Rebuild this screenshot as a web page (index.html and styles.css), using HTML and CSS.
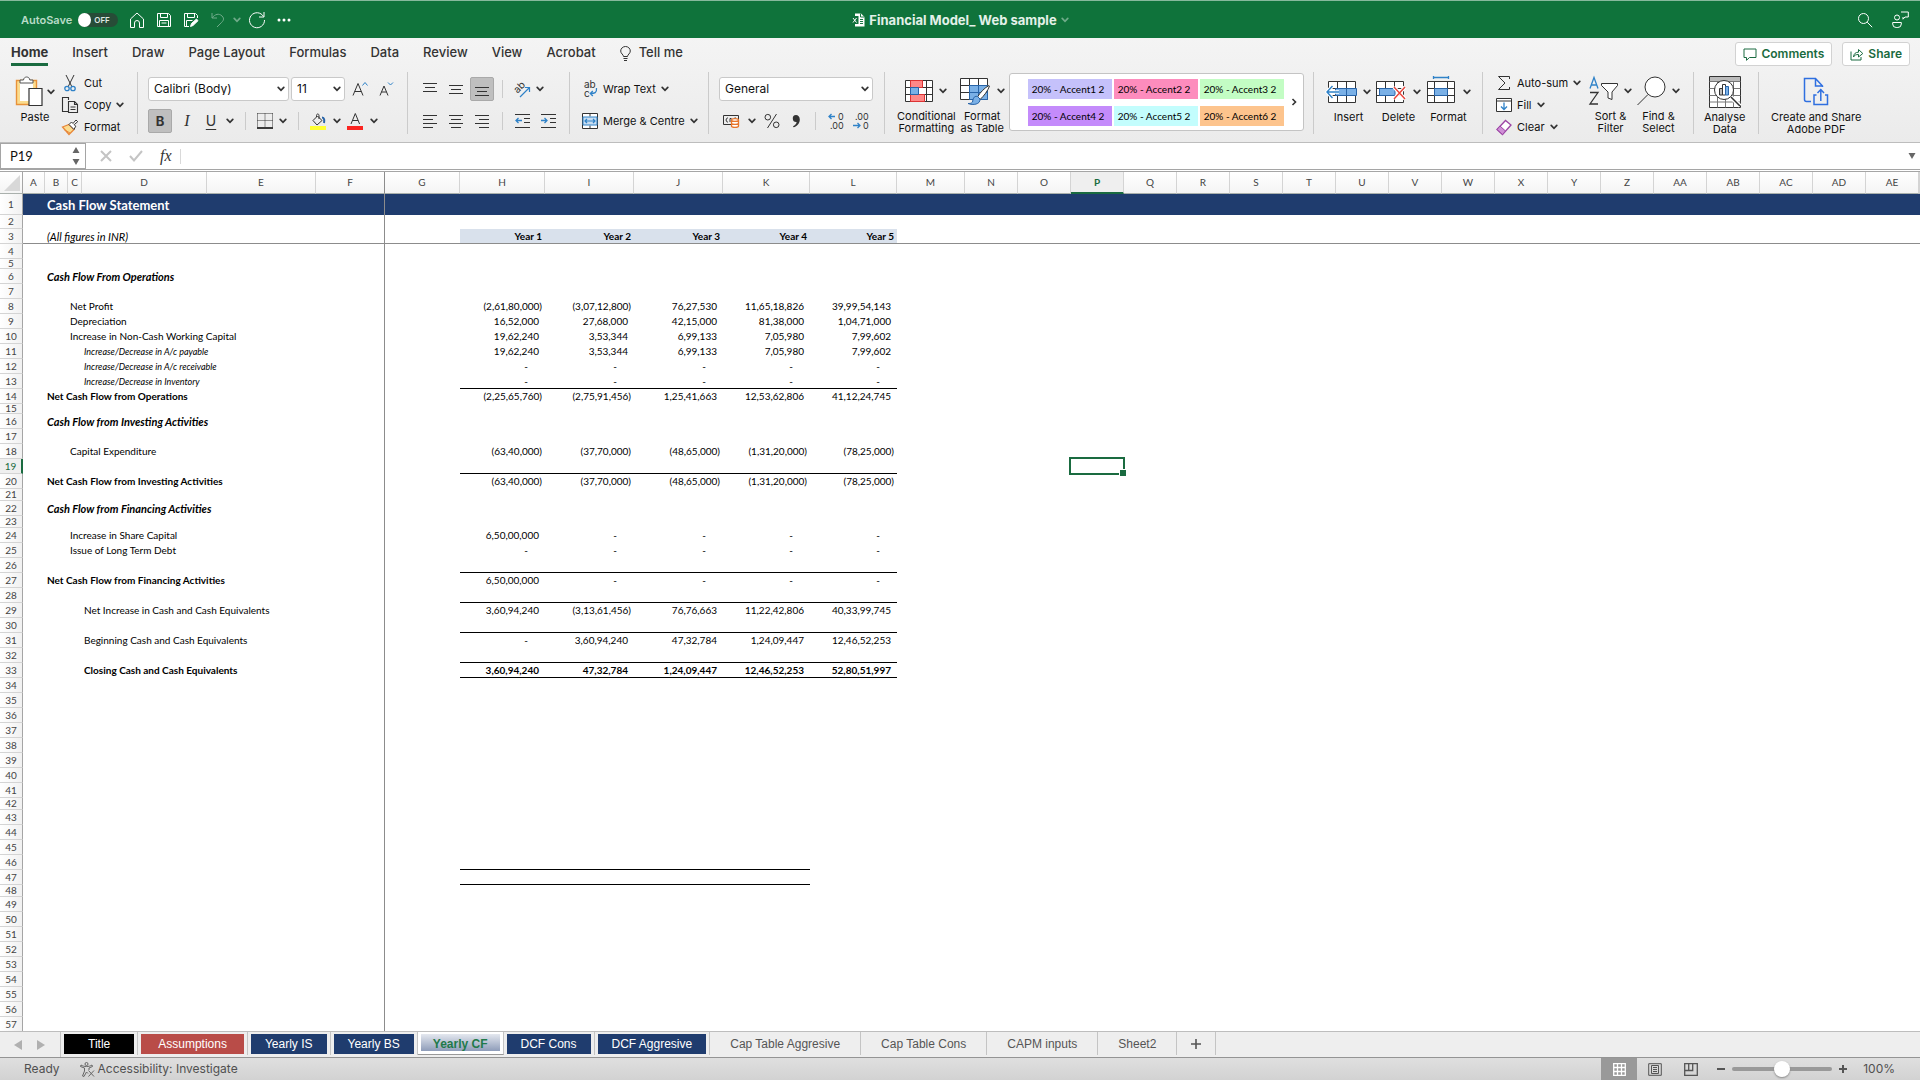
FILE: index.html
```html
<!DOCTYPE html>
<html lang="en">
<head>
  <meta charset="UTF-8">
  <meta name="viewport" content="width=device-width, initial-scale=1.0">
  <title>Financial Model_ Web sample</title>
  <link rel="stylesheet" href="styles.css">
</head>
<body>
  <svg class="sprite" aria-hidden="true">
    <symbol id="chev" viewBox="0 0 8 6"><path d="M1.2 1.3L4 4.3l2.8-3" fill="none" stroke="currentColor" stroke-width="1.7" stroke-linecap="round"/></symbol>
  </svg>

  <header class="titlebar">
    <div class="quick">
      <label class="autosave">AutoSave
        <span class="toggle"><input type="checkbox"><span>OFF</span></span>
      </label>
      <button aria-label="Home"><svg width="16" height="16" viewBox="0 0 16 16"><path d="M1.5 7L8 1l6.500 6v8.500H10.500V11a2.500 2.500 0 0 0-5 0v4.500H1.500z"/></svg></button>
      <button aria-label="Save"><svg width="16" height="16" viewBox="0 0 16 16"><path d="M1.500 1.500h11l2 2v11h-13zM4.500 1.500v4h7v-4M3.500 14.500v-6h9v6M5.500 11h5"/></svg></button>
      <button aria-label="Save as"><svg width="16" height="16" viewBox="0 0 16 16"><path d="M6 14.500H1.500v-13h11l2 2V6M4.500 1.500v4h7v-4M3.500 14.500v-6h6"/><path d="M7.500 14.500l1-3 5-4.500 1.500 1.700-5 4.800z" fill="#fff"/></svg></button>
      <button class="faded" aria-label="Undo"><svg width="16" height="16" viewBox="0 0 16 16"><path d="M2 1v5h5M2 6c3-4 7-5 10-2s1 5-1 7l-4 4"/></svg></button>
      <button class="faded undo-list" aria-label="Undo list"><svg class="chev" width="8" height="6"><use href="#chev"/></svg></button>
      <button aria-label="Redo"><svg width="18" height="18" viewBox="0 0 18 18"><path d="M15.500 5.500A7.500 7.500 0 1 0 16.500 9M16 1v5h-5"/></svg></button>
      <button aria-label="More"><svg width="14" height="4" viewBox="0 0 14 4"><g fill="#fff" stroke="none"><circle cx="2" cy="2" r="1.500"/><circle cx="7" cy="2" r="1.500"/><circle cx="12" cy="2" r="1.500"/></g></svg></button>
    </div>
    <div class="doc">
      <svg width="14" height="14" viewBox="0 0 14 14"><path d="M4 .5h6l3.500 3.500v9.500H4z" fill="#fff" stroke="none"/><path d="M9.500 .5V4h4M9 6.500h3M9 8.500h3M9 10.500h3" stroke="#1a7a45"/><path d="M0 3h7.500v8H0z" fill="#0f703b" stroke="none"/><path d="M2 5l3.500 4.500M5.500 5L2 9.500"/></svg>
      <h1>Financial Model_ Web sample</h1>
      <svg class="chev faded" width="8" height="6"><use href="#chev"/></svg>
    </div>
    <div class="account">
      <button aria-label="Search"><svg width="16" height="16" viewBox="0 0 16 16"><circle cx="6.500" cy="6.500" r="5"/><path d="M10.200 10.200l5 5"/></svg></button>
      <button aria-label="Collaborate"><svg width="17" height="17" viewBox="0 0 17 17"><circle cx="5" cy="6.500" r="2.500"/><path d="M.7 11.500h8.600v1.500a3.500 3.500 0 0 1-3.500 3.500H4.200A3.500 3.500 0 0 1 .7 13zM9 1h7.300v5H13l-2 2.200V6"/></svg></button>
    </div>
  </header>

  <section class="ribbon">
    <nav class="tabs">
      <a class="active" href="#">Home</a>
      <a href="#">Insert</a>
      <a href="#">Draw</a>
      <a href="#">Page Layout</a>
      <a href="#">Formulas</a>
      <a href="#">Data</a>
      <a href="#">Review</a>
      <a href="#">View</a>
      <a href="#">Acrobat</a>
      <a class="tell" href="#"><svg width="11" height="15" viewBox="0 0 11 15"><path d="M3.500 10.500c0-2-2.800-2.800-2.800-5.500a4.800 4.500 0 0 1 9.600 0c0 2.700-2.800 3.500-2.800 5.500zM3.500 12.500h4M4 14.500h3"/></svg>Tell me</a>
      <div class="actions">
        <button><svg width="14" height="13" viewBox="0 0 14 13"><path d="M1 1h12v8.500H6.500l-3 2.800V9.500H1z"/></svg>Comments</button>
        <button><svg width="14" height="13" viewBox="0 0 14 13"><path d="M1 3.500v8.500h10V9M3.500 9c.3-3.500 2.200-4.800 5-4.800V1.500L12.800 5.500 8.500 9V6.500C6 6.500 4.500 7 3.500 9z"/></svg>Share</button>
      </div>
    </nav>

    <div class="groups">
      <div class="group clipboard">
        <button class="big">
          <span class="icon"><svg width="28" height="31" viewBox="0 0 28 31"><path d="M1.500 4.500h20v24h-20z" fill="#fbdc8e" stroke="#e8923a" stroke-width="1.400"/><path d="M5 7h13v18H5z" fill="#fff" stroke="none"/><path d="M5 7V4h3.500c.3-4 6-4 6.300 0H18v3z" fill="#fff" stroke="#555"/><path d="M14 12.500h13v17H14z" fill="#fff" stroke="#333" stroke-width="1.200"/></svg><svg class="chev" width="8" height="6"><use href="#chev"/></svg></span>
          Paste
        </button>
        <div class="stack">
          <button><svg width="18" height="18" viewBox="0 0 18 18"><path d="M5 1l6 12M13 1L7 13" /><g stroke="#2f82c8" stroke-width="1.300"><circle cx="6" cy="14.500" r="2.200"/><circle cx="12" cy="14.500" r="2.200"/></g></svg>Cut</button>
          <button><svg width="18" height="18" viewBox="0 0 18 18"><path d="M7 15.500H1.500v-14h6V4M7.500 5.500h6l3 3v8h-9zM13.500 5.500v3h3M9.500 11h5M9.500 13.500h5" stroke-width="1.100"/></svg>Copy<svg class="chev" width="8" height="6"><use href="#chev"/></svg></button>
          <button><svg width="18" height="18" viewBox="0 0 18 18"><path d="M1.500 9L8 6.500l5 5L8 16.500z" fill="#fbdc8e" stroke="#e8873a" stroke-width="1.300"/><path d="M3 11.500l6 3.500" stroke="#e8873a"/><path d="M8 6.500L10.500 4l1.500 1.500L15 2l1.700 1.700-3.500 3 1.500 1.500L13 11.500z" fill="#fff"/></svg>Format</button>
        </div>
      </div>

      <div class="group font">
        <div class="row">
          <label class="combo combo-font"><select aria-label="Font"><option>Calibri (Body)</option></select><svg class="chev" width="8" height="6"><use href="#chev"/></svg></label>
          <label class="combo combo-size"><select aria-label="Font size"><option>11</option></select><svg class="chev" width="8" height="6"><use href="#chev"/></svg></label>
          <button class="grow" aria-label="Increase font size"><svg width="17" height="16" viewBox="0 0 17 16"><path d="M1 14.500L6 2.500l5 12M2.800 10.500h6.400"/><path d="M10.500 4.500l2.500-3 2.500 3" stroke="#2f82c8"/></svg></button>
          <button class="shrink" aria-label="Decrease font size"><svg width="17" height="16" viewBox="0 0 17 16"><path d="M2 14.500l4-9.500 4 9.500M3.500 11h5"/><path d="M10 1.500l2.500 2.500L15 1.500" stroke="#2f82c8"/></svg></button>
        </div>
        <div class="row row-format">
          <button class="square pressed" aria-label="Bold"><b>B</b></button>
          <button class="glyph" aria-label="Italic"><i>I</i></button>
          <button class="glyph under" aria-label="Underline">U</button>
          <svg class="chev" width="8" height="6"><use href="#chev"/></svg>
          <span class="rule"></span>
          <button aria-label="Borders"><svg width="16" height="16" viewBox="0 0 16 16"><path d="M.5 .5h15M.5 7.500h15M.5 .5v14M8 .5v14M15.500 .5v14" stroke-dasharray="1 1"/><path d="M0 15h16" stroke="#000" stroke-width="1.500"/></svg></button>
          <svg class="chev" width="8" height="6"><use href="#chev"/></svg>
          <span class="rule"></span>
          <button aria-label="Fill colour"><svg width="17" height="17" viewBox="0 0 17 17"><path d="M3 7.500L7.500 3l4.500 4.500L7 12zM6.500 4V2.500c0-2 2.500-2 2.500 0V6"/><path d="M12 4.500c2.500 0 2.500 3 2 5.500" stroke="#2864a8" stroke-width="2"/><path d="M0 13h16v4H0z" fill="#ff3" stroke="none"/></svg></button>
          <svg class="chev" width="8" height="6"><use href="#chev"/></svg>
          <button aria-label="Font colour"><svg width="17" height="17" viewBox="0 0 17 17"><path d="M4 11l4.300-10.500L12.600 11M5.500 7.500h5.600"/><path d="M0 13h16v4H0z" fill="#fb2420" stroke="none"/></svg></button>
          <svg class="chev" width="8" height="6"><use href="#chev"/></svg>
        </div>
      </div>

      <div class="group align">
        <div class="row">
          <button class="square" aria-label="Top align"><svg width="14" height="14" viewBox="0 0 14 14"><path d="M0 1.500h14M2 5.500h10M0 9.500h14"/></svg></button>
          <button class="square" aria-label="Middle align"><svg width="14" height="14" viewBox="0 0 14 14"><path d="M0 3.500h14M2 7.500h10M0 11.500h14"/></svg></button>
          <button class="square pressed" aria-label="Bottom align"><svg width="14" height="14" viewBox="0 0 14 14"><path d="M0 5.500h14M2 9.500h10M0 13.500h14"/></svg></button>
          <span class="rule"></span>
          <button class="square" aria-label="Orientation"><svg width="18" height="18" viewBox="0 0 18 18"><path d="M7 17l9-9M12 7.500h4.500V12" stroke="#2f82c8" stroke-width="1.200"/><text x="1" y="11" font-size="10" transform="rotate(-45 6 8)" fill="#333" stroke="none">ab</text></svg></button>
          <svg class="chev" width="8" height="6"><use href="#chev"/></svg>
        </div>
        <div class="row">
          <button class="square" aria-label="Align left"><svg width="14" height="14" viewBox="0 0 14 14"><path d="M0 1.500h14M0 5.500h10M0 9.500h14M0 13.500h10"/></svg></button>
          <button class="square" aria-label="Centre"><svg width="14" height="14" viewBox="0 0 14 14"><path d="M0 1.500h14M2 5.500h10M0 9.500h14M2 13.500h10"/></svg></button>
          <button class="square" aria-label="Align right"><svg width="14" height="14" viewBox="0 0 14 14"><path d="M0 1.500h14M4 5.500h10M0 9.500h14M4 13.500h10"/></svg></button>
          <span class="rule"></span>
          <button class="square" aria-label="Decrease indent"><svg width="15" height="14" viewBox="0 0 15 14"><path d="M0 .5h15M9 4.500h6M9 8.500h6M0 13.500h15"/><path d="M7 6.500H1M3.500 4L1 6.500 3.500 9" stroke="#2f82c8" stroke-width="1.300"/></svg></button>
          <button class="square" aria-label="Increase indent"><svg width="15" height="14" viewBox="0 0 15 14"><path d="M0 .5h15M9 4.500h6M9 8.500h6M0 13.500h15"/><path d="M0 6.500h6M3.500 4L6 6.500 3.500 9" stroke="#2f82c8" stroke-width="1.300"/></svg></button>
        </div>
      </div>

      <div class="group wrap">
        <button class="row"><svg width="16" height="20" viewBox="0 0 16 20"><g font-size="10" fill="#333" stroke="none"><text x="2" y="9">ab</text><text x="2" y="18">c</text></g><path d="M14.500 9c.5 5-2 5.500-6 5.500M10.800 12l-2.500 2.500 2.500 2.500" stroke="#2f82c8" stroke-width="1.300"/></svg>Wrap Text<svg class="chev" width="8" height="6"><use href="#chev"/></svg></button>
        <button class="row"><svg width="16" height="16" viewBox="0 0 16 16"><path d="M.5 .5h15v15H.5zM8 .5v3M8 12.500v3" fill="#fff"/><path d="M1 4h14v8H1z" fill="#c9def2" stroke="#2f82c8"/><path d="M3 8h10M5 6L3 8l2 2M11 6l2 2-2 2" stroke="#2f82c8" stroke-width="1.200"/></svg>Merge &amp; Centre<svg class="chev" width="8" height="6"><use href="#chev"/></svg></button>
      </div>

      <div class="group number">
        <div class="row">
          <label class="combo combo-number"><select aria-label="Number format"><option>General</option></select><svg class="chev" width="8" height="6"><use href="#chev"/></svg></label>
        </div>
        <div class="row row-number">
          <button aria-label="Currency"><svg width="17" height="14" viewBox="0 0 17 14"><path d="M.5 1.500h15v9H.5z"/><path d="M5 4c-2.500-.5-2.500 4.500 0 4M7 4.500v3.500M7 4.500h1.500M13 4c-2-.5-2.500 1.500-2.500 3"/><path d="M8.500 6v6c0 1.800 7 1.800 7 0V6c0-1.800-7-1.800-7 0zM8.500 6c0 1.800 7 1.800 7 0M8.500 9c0 1.800 7 1.800 7 0" fill="#fff" stroke="#e8762c" stroke-width="1.300"/></svg></button>
          <svg class="chev" width="8" height="6"><use href="#chev"/></svg>
          <button aria-label="Percent"><svg width="16" height="16" viewBox="0 0 16 16"><circle cx="3.800" cy="4.200" r="2.800"/><circle cx="12.200" cy="11.800" r="2.800"/><path d="M12.500 1L3.500 15"/></svg></button>
          <button aria-label="Comma style"><svg width="16" height="14" viewBox="-3 0 16 14"><path d="M5 1a3.500 3.500 0 1 0 .6 7C5.400 10 4 11.500 2 12.300l.5 1C6 12.500 8.800 9.500 8.800 5.500 8.800 2.500 7 1 5 1z" fill="#333" stroke="none"/></svg></button>
          <span class="rule"></span>
          <button aria-label="Increase decimal"><svg width="17" height="20" viewBox="0 0 17 20"><g font-size="9" fill="#333" stroke="none"><text x="10" y="9">0</text><text x="2" y="18">.00</text></g><path d="M7 5.500H1M3.500 3L1 5.500 3.500 8" stroke="#2f82c8" stroke-width="1.300"/></svg></button>
          <button aria-label="Decrease decimal"><svg width="17" height="20" viewBox="0 0 17 20"><g font-size="9" fill="#333" stroke="none"><text x="2" y="9">.00</text><text x="10" y="18">0</text></g><path d="M0 14.500h7M4.500 12L7 14.500 4.500 17" stroke="#2f82c8" stroke-width="1.300"/></svg></button>
        </div>
      </div>

      <div class="group styles">
        <button class="big">
          <span class="icon"><svg width="28" height="22" viewBox="0 0 28 22"><path d="M.5 .5h27v21H.5z" fill="#fff"/><path d="M.5 7.500h27M.5 14.500h27M5.500 .5v21M21.500 .5v21"/><path d="M5.500 .5h12v7h-12zM5.500 14.500h14v7h-14z" fill="#f88" stroke="#d33"/><path d="M5.500 7.500h8v7h-8z" fill="#7ab0e6" stroke="#2864a8"/></svg><svg class="chev" width="8" height="6"><use href="#chev"/></svg></span>
          Conditional<br>Formatting
        </button>
        <button class="big">
          <span class="icon"><svg width="31" height="28" viewBox="0 0 31 28"><path d="M.5 1.500h27v21H.5z" fill="#fff"/><path d="M.5 8.500h27M.5 15.500h27M9.500 1.500v21M18.500 1.500v21"/><path d="M9.500 8.500h18v14h-18z" fill="#7ab0e6" stroke="#2864a8"/><path d="M9.500 15.500h18M18.500 8.500v14" stroke="#2864a8"/><path d="M29 8.500c-4 2-9 7-11.500 11.500l2.500 2.500c4-3.500 8-9 9.500-13.500z" fill="#fff"/><path d="M17.500 19.500c-4-1-4.500 3-5 5.500-1 1.500-3 1.500-4.500 1.500 5 2 12.500 1 12-4.500z" fill="#7ab0e6" stroke="#2864a8"/></svg><svg class="chev" width="8" height="6"><use href="#chev"/></svg></span>
          Format<br>as Table
        </button>
        <div class="gallery">
          <div class="swatches">
            <button class="accent1">20% - Accent1 2</button>
            <button class="accent2">20% - Accent2 2</button>
            <button class="accent3">20% - Accent3 2</button>
            <button class="accent4">20% - Accent4 2</button>
            <button class="accent5">20% - Accent5 2</button>
            <button class="accent6">20% - Accent6 2</button>
          </div>
          <button aria-label="More styles"><svg width="6" height="8" viewBox="0 0 6 8"><path d="M1.500 1l3 3-3 3" stroke-width="1.600"/></svg></button>
        </div>
      </div>

      <div class="group cells">
        <button class="big">
          <span class="icon"><svg width="31" height="22" viewBox="0 0 31 22"><path d="M2.500 .5h27v21h-27z" fill="#fff"/><path d="M2.500 7.500h27M2.500 14.500h27M11.500 .5v21M20.500 .5v21"/><path d="M9.500 7.500h21v7h-21z" fill="#7ab0e6" stroke="#2864a8"/><path d="M20.500 7.500v7" stroke="#2864a8"/><path d="M13 11H1M6.500 5L1 11l5.500 6" stroke="#fff" stroke-width="3.500"/><path d="M13 11H1M6.500 5L1 11l5.500 6" stroke="#2f82c8" stroke-width="1.400"/></svg><svg class="chev" width="8" height="6"><use href="#chev"/></svg></span>
          Insert
        </button>
        <button class="big">
          <span class="icon"><svg width="31" height="22" viewBox="0 0 31 22"><path d="M.5 .5h27v21H.5z" fill="#fff"/><path d="M.5 7.500h27M.5 14.500h27M9.500 .5v21M18.500 .5v21"/><path d="M3.500 7.500H19v7H3.500z" fill="#7ab0e6" stroke="#2864a8"/><path d="M18 6l11 12M29 6L18 18" stroke="#fff" stroke-width="3.500"/><path d="M18 6l11 12M29 6L18 18" stroke="#e8433a" stroke-width="1.400"/></svg><svg class="chev" width="8" height="6"><use href="#chev"/></svg></span>
          Delete
        </button>
        <button class="big">
          <span class="icon"><svg width="31" height="32" viewBox="0 0 31 32"><path d="M1.500 5.500h27v21h-27z" fill="#fff"/><path d="M1.500 12.500h27M1.500 19.500h27M8.500 5.500v21M21.500 5.500v21"/><path d="M8.500 12.500h13v7h-13z" fill="#7ab0e6" stroke="#2864a8"/><path d="M7.500 1.500h15M7.500 0v3M22.500 0v3" stroke="#2f82c8" stroke-width="1.300"/></svg><svg class="chev" width="8" height="6"><use href="#chev"/></svg></span>
          Format
        </button>
      </div>

      <div class="group editing">
        <div class="stack">
          <button><svg width="16" height="16" viewBox="0 0 16 16"><path d="M13.500 4V1.500h-11L9 8l-6.500 6.500h11V12"/></svg>Auto-sum<svg class="chev" width="8" height="6"><use href="#chev"/></svg></button>
          <button><svg width="16" height="16" viewBox="0 0 16 16"><path d="M.5 1.500h15v13H.5zM.5 4h15" fill="#fff"/><path d="M8 5.500v7M5 9.500l3 3 3-3" stroke="#2f82c8" stroke-width="1.300"/></svg>Fill<svg class="chev" width="8" height="6"><use href="#chev"/></svg></button>
          <button><svg width="16" height="16" viewBox="0 0 16 16"><path d="M1 10.500l8.500-9 5.500 4.500-8.500 9.500z" fill="#fff" stroke="#9c45a5" stroke-width="1.300"/><path d="M1 10.500l3-3.500 5.500 5-3 3.500z" fill="#cf8fd6" stroke="#9c45a5"/></svg>Clear<svg class="chev" width="8" height="6"><use href="#chev"/></svg></button>
        </div>
        <button class="big">
          <span class="icon"><svg width="29" height="32" viewBox="0 0 29 32"><path d="M1 13.500L5 2.500l4 11M2.500 10h5" stroke="#2f82c8" stroke-width="1.300"/><path d="M1 17.500h8L1 29h8" stroke-width="1.300"/><path d="M12.500 8.500h16v2L23 17v7.500l-4-1.500v-6l-6.500-6.500z" fill="#fff"/></svg><svg class="chev" width="8" height="6"><use href="#chev"/></svg></span>
          Sort &amp;<br>Filter
        </button>
        <button class="big">
          <span class="icon"><svg width="29" height="30" viewBox="0 0 29 30"><circle cx="18" cy="11" r="10" fill="#fff"/><path d="M11 18.500L.5 29"/></svg><svg class="chev" width="8" height="6"><use href="#chev"/></svg></span>
          Find &amp;<br>Select
        </button>
      </div>

      <div class="group analyse">
        <button class="big">
          <span class="icon"><svg width="32" height="32" viewBox="0 0 32 32"><path d="M.5 .5h31v31H.5z" fill="#fff"/><path d="M1 1h30v4H1z" fill="#bbb" stroke="none"/><path d="M.5 5.500h31M.5 12.500h31M.5 19.500h31M.5 26h31M8.500 5.500v26M16.500 5.500v26M24.500 5.500v26" stroke="#777"/><circle cx="15" cy="14" r="9.500" fill="#fff"/><path d="M22 21l9 9" stroke="#fff" stroke-width="4"/><path d="M22 21l9 9" stroke-width="1.500"/><path d="M10.500 12.500h3V19h-3z" fill="#bbb"/><path d="M13.500 8.500h3V19h-3z" fill="#fff"/><path d="M16.500 10.500h3V19h-3z" fill="#7ab0e6" stroke="#2864a8"/></svg></span>
          Analyse<br>Data
        </button>
      </div>

      <div class="group adobe">
        <button class="big">
          <span class="icon"><svg width="26" height="29" viewBox="0 0 26 29"><g stroke="#2f6fe0" stroke-width="1.500"><path d="M8 24.500H3.500A2 2 0 0 1 1.500 22.500V1.500h11l7 7.500v1M12.500 1.500V9h7"/><path d="M13.500 18H11v9.500h13.500V18H22M17.800 24V13M14.500 16l3.300-3.500L21 16"/></g></svg></span>
          Create and Share<br>Adobe PDF
        </button>
      </div>
    </div>
  </section>

  <div class="formula">
    <div class="namebox">
      <input type="text" value="P19" aria-label="Name box">
      <svg width="8" height="18" viewBox="0 0 8 18"><path d="M4 0l3.500 6h-7zM4 18l3.500-6h-7z" fill="#666" stroke="none"/></svg>
    </div>
    <button aria-label="Cancel"><svg width="12" height="12" viewBox="0 0 12 12"><path d="M1 1l10 10M11 1L1 11" stroke="#c4c4c4" stroke-width="2"/></svg></button>
    <button aria-label="Enter"><svg width="14" height="12" viewBox="0 0 14 12"><path d="M1 6l4 4.500L13 1" stroke="#c4c4c4" stroke-width="2"/></svg></button>
    <button class="fx" aria-label="Insert function">fx</button>
    <input class="entry" type="text" aria-label="Formula">
    <button aria-label="Expand formula bar"><svg width="8" height="6" viewBox="0 0 8 6"><path d="M.5 0h7L4 6z" fill="#666" stroke="none"/></svg></button>
  </div>

  <main class="sheet">
    <table>
      <colgroup>
        <col class="w23"><col class="w22"><col class="w23"><col class="w14"><col class="w125"><col class="w109"><col class="w69"><col class="w75"><col class="w85"><col class="w89"><col class="w89"><col class="w87"><col class="w87"><col class="w68"><col class="w53" span="18"><col>
      </colgroup>
      <thead>
        <tr>
          <th class="corner"><svg width="16" height="16" viewBox="0 0 16 16"><path d="M16 0v16H0z" fill="#d8d8d8" stroke="none"/></svg></th>
          <th>A</th><th>B</th><th>C</th><th>D</th><th>E</th><th class="freeze">F</th><th>G</th><th>H</th><th>I</th><th>J</th><th>K</th><th>L</th><th>M</th><th>N</th><th>O</th><th class="current">P</th><th>Q</th><th>R</th><th>S</th><th>T</th><th>U</th><th>V</th><th>W</th><th>X</th><th>Y</th><th>Z</th><th>AA</th><th>AB</th><th>AC</th><th>AD</th><th>AE</th><th></th>
        </tr>
      </thead>
      <tbody>
        <tr class="banner"><th>1</th><td></td><td class="freeze" colspan="5">Cash Flow Statement</td><td colspan="26"></td></tr>
        <tr class="h14"><th>2</th><td class="freeze" colspan="6"></td></tr>
        <tr class="years"><th>3</th><td></td><td class="freeze note" colspan="5">(All figures in INR)</td><td></td><td class="year">Year 1</td><td class="year">Year 2</td><td class="year">Year 3</td><td class="year">Year 4</td><td class="year">Year 5</td><td colspan="20"></td></tr>
        <tr><th>4</th><td class="freeze" colspan="6"></td></tr>
        <tr class="h10"><th>5</th><td class="freeze" colspan="6"></td></tr>
        <tr class="section"><th>6</th><td></td><td class="freeze" colspan="5">Cash Flow From Operations</td></tr>
        <tr><th>7</th><td class="freeze" colspan="6"></td></tr>
        <tr><th>8</th><td colspan="2"></td><td class="freeze" colspan="4">Net Profit</td><td></td><td class="neg">(2,61,80,000)</td><td class="neg">(3,07,12,800)</td><td class="num">76,27,530</td><td class="num">11,65,18,826</td><td class="num">39,99,54,143</td></tr>
        <tr><th>9</th><td colspan="2"></td><td class="freeze" colspan="4">Depreciation</td><td></td><td class="num">16,52,000</td><td class="num">27,68,000</td><td class="num">42,15,000</td><td class="num">81,38,000</td><td class="num">1,04,71,000</td></tr>
        <tr><th>10</th><td colspan="2"></td><td class="freeze" colspan="4">Increase in Non-Cash Working Capital</td><td></td><td class="num">19,62,240</td><td class="num">3,53,344</td><td class="num">6,99,133</td><td class="num">7,05,980</td><td class="num">7,99,602</td></tr>
        <tr><th>11</th><td colspan="3"></td><td class="freeze detail" colspan="3">Increase/Decrease in A/c payable</td><td></td><td class="num">19,62,240</td><td class="num">3,53,344</td><td class="num">6,99,133</td><td class="num">7,05,980</td><td class="num">7,99,602</td></tr>
        <tr><th>12</th><td colspan="3"></td><td class="freeze detail" colspan="3">Increase/Decrease in A/c receivable</td><td></td><td class="nil">-</td><td class="nil">-</td><td class="nil">-</td><td class="nil">-</td><td class="nil">-</td></tr>
        <tr><th>13</th><td colspan="3"></td><td class="freeze detail" colspan="3">Increase/Decrease in Inventory</td><td></td><td class="nil line">-</td><td class="nil line">-</td><td class="nil line">-</td><td class="nil line">-</td><td class="nil line">-</td></tr>
        <tr><th>14</th><td></td><td class="freeze total" colspan="5">Net Cash Flow from Operations</td><td></td><td class="neg">(2,25,65,760)</td><td class="neg">(2,75,91,456)</td><td class="num">1,25,41,663</td><td class="num">12,53,62,806</td><td class="num">41,12,24,745</td></tr>
        <tr class="h10"><th>15</th><td class="freeze" colspan="6"></td></tr>
        <tr class="section"><th>16</th><td></td><td class="freeze" colspan="5">Cash Flow from Investing Activities</td></tr>
        <tr><th>17</th><td class="freeze" colspan="6"></td></tr>
        <tr><th>18</th><td colspan="2"></td><td class="freeze" colspan="4">Capital Expenditure</td><td></td><td class="neg">(63,40,000)</td><td class="neg">(37,70,000)</td><td class="neg">(48,65,000)</td><td class="neg">(1,31,20,000)</td><td class="neg">(78,25,000)</td></tr>
        <tr><th class="current">19</th><td class="freeze" colspan="6"></td><td></td><td class="line" colspan="5"></td><td colspan="3"></td><td class="selected"></td></tr>
        <tr><th>20</th><td></td><td class="freeze total" colspan="5">Net Cash Flow from Investing Activities</td><td></td><td class="neg">(63,40,000)</td><td class="neg">(37,70,000)</td><td class="neg">(48,65,000)</td><td class="neg">(1,31,20,000)</td><td class="neg">(78,25,000)</td></tr>
        <tr class="h12"><th>21</th><td class="freeze" colspan="6"></td></tr>
        <tr class="section"><th>22</th><td></td><td class="freeze" colspan="5">Cash Flow from Financing Activities</td></tr>
        <tr class="h12"><th>23</th><td class="freeze" colspan="6"></td></tr>
        <tr><th>24</th><td colspan="2"></td><td class="freeze" colspan="4">Increase in Share Capital</td><td></td><td class="num">6,50,00,000</td><td class="nil">-</td><td class="nil">-</td><td class="nil">-</td><td class="nil">-</td></tr>
        <tr><th>25</th><td colspan="2"></td><td class="freeze" colspan="4">Issue of Long Term Debt</td><td></td><td class="nil">-</td><td class="nil">-</td><td class="nil">-</td><td class="nil">-</td><td class="nil">-</td></tr>
        <tr><th>26</th><td class="freeze" colspan="6"></td><td></td><td class="line" colspan="5"></td></tr>
        <tr><th>27</th><td></td><td class="freeze total" colspan="5">Net Cash Flow from Financing Activities</td><td></td><td class="num">6,50,00,000</td><td class="nil">-</td><td class="nil">-</td><td class="nil">-</td><td class="nil">-</td></tr>
        <tr><th>28</th><td class="freeze" colspan="6"></td><td></td><td class="line" colspan="5"></td></tr>
        <tr><th>29</th><td colspan="3"></td><td class="freeze" colspan="3">Net Increase in Cash and Cash Equivalents</td><td></td><td class="num">3,60,94,240</td><td class="neg">(3,13,61,456)</td><td class="num">76,76,663</td><td class="num">11,22,42,806</td><td class="num">40,33,99,745</td></tr>
        <tr><th>30</th><td class="freeze" colspan="6"></td><td></td><td class="line" colspan="5"></td></tr>
        <tr><th>31</th><td colspan="3"></td><td class="freeze" colspan="3">Beginning Cash and Cash Equivalents</td><td></td><td class="nil">-</td><td class="num">3,60,94,240</td><td class="num">47,32,784</td><td class="num">1,24,09,447</td><td class="num">12,46,52,253</td></tr>
        <tr><th>32</th><td class="freeze" colspan="6"></td><td></td><td class="line" colspan="5"></td></tr>
        <tr class="closing"><th>33</th><td colspan="3"></td><td class="freeze" colspan="3">Closing Cash and Cash Equivalents</td><td></td><td class="num line">3,60,94,240</td><td class="num line">47,32,784</td><td class="num line">1,24,09,447</td><td class="num line">12,46,52,253</td><td class="num line">52,80,51,997</td></tr>
        <tr><th>34</th><td class="freeze" colspan="6"></td></tr>
        <tr><th>35</th><td class="freeze" colspan="6"></td></tr>
        <tr><th>36</th><td class="freeze" colspan="6"></td></tr>
        <tr><th>37</th><td class="freeze" colspan="6"></td></tr>
        <tr><th>38</th><td class="freeze" colspan="6"></td></tr>
        <tr><th>39</th><td class="freeze" colspan="6"></td></tr>
        <tr><th>40</th><td class="freeze" colspan="6"></td></tr>
        <tr><th>41</th><td class="freeze" colspan="6"></td></tr>
        <tr class="h12"><th>42</th><td class="freeze" colspan="6"></td></tr>
        <tr><th>43</th><td class="freeze" colspan="6"></td></tr>
        <tr><th>44</th><td class="freeze" colspan="6"></td></tr>
        <tr><th>45</th><td class="freeze" colspan="6"></td></tr>
        <tr><th>46</th><td class="freeze" colspan="6"></td><td></td><td class="line" colspan="4"></td></tr>
        <tr><th>47</th><td class="freeze" colspan="6"></td><td></td><td class="line" colspan="4"></td></tr>
        <tr class="h12"><th>48</th><td class="freeze" colspan="6"></td></tr>
        <tr><th>49</th><td class="freeze" colspan="6"></td></tr>
        <tr><th>50</th><td class="freeze" colspan="6"></td></tr>
        <tr><th>51</th><td class="freeze" colspan="6"></td></tr>
        <tr><th>52</th><td class="freeze" colspan="6"></td></tr>
        <tr><th>53</th><td class="freeze" colspan="6"></td></tr>
        <tr><th>54</th><td class="freeze" colspan="6"></td></tr>
        <tr><th>55</th><td class="freeze" colspan="6"></td></tr>
        <tr><th>56</th><td class="freeze" colspan="6"></td></tr>
        <tr><th>57</th><td class="freeze" colspan="6"></td></tr>
      </tbody>
    </table>
  </main>

  <nav class="sheettabs">
    <div class="arrows">
      <button aria-label="Previous sheet"><svg width="8" height="10" viewBox="0 0 8 10"><path d="M8 0v10L0 5z" fill="#b0b0b0" stroke="none"/></svg></button>
      <button aria-label="Next sheet"><svg width="8" height="10" viewBox="0 0 8 10"><path d="M0 0v10l8-5z" fill="#b0b0b0" stroke="none"/></svg></button>
    </div>
    <a class="black" href="#"><span>Title</span></a>
    <a class="red" href="#"><span>Assumptions</span></a>
    <a class="blue" href="#"><span>Yearly IS</span></a>
    <a class="blue" href="#"><span>Yearly BS</span></a>
    <a class="open" href="#"><span>Yearly CF</span></a>
    <a class="blue" href="#"><span>DCF Cons</span></a>
    <a class="blue" href="#"><span>DCF Aggresive</span></a>
    <a href="#"><span>Cap Table Aggresive</span></a>
    <a href="#"><span>Cap Table Cons</span></a>
    <a href="#"><span>CAPM inputs</span></a>
    <a href="#"><span>Sheet2</span></a>
    <button class="add" aria-label="Add sheet"><svg width="10" height="10" viewBox="0 0 10 10"><path d="M5 0v10M0 5h10" stroke="#555" stroke-width="1.600"/></svg></button>
  </nav>

  <footer class="status">
    <span>Ready</span>
    <button class="access"><svg width="15" height="15" viewBox="0 0 15 15"><g stroke="#666"><circle cx="6.500" cy="2" r="1.500"/><path d="M1 3c3 2 8 2 11 0l.5 1.500L9 6v2M1 3l-.5 1.500L4.500 6v3l-2 5 1.500.5L6.500 10l1.500 1.500M8.500 8.500l5.500 6M14 8.500l-5.500 6"/></g></svg>Accessibility: Investigate</button>
    <div class="views">
      <button class="on" aria-label="Normal view"><svg width="13" height="13" viewBox="0 0 13 13"><path d="M.7 .7h11.600v11.600H.7zM.7 4.500h11.600M.7 8.500h11.600M4.500 .7v11.600M8.500 .7v11.600" stroke="#fff" stroke-width="1.300"/></svg></button>
      <button aria-label="Page layout view"><svg width="14" height="13" viewBox="0 0 14 13"><path d="M.7 .7h12.600v11.600H.7zM3.500 2.500h7v8h-7zM5 4.500h4M5 6.500h4M5 8.500h4"/></svg></button>
      <button aria-label="Page break view"><svg width="14" height="13" viewBox="0 0 14 13"><path d="M.7 .7h12.600v11.600H.7zM.7 7.500h8V.7M4.700 .7v6.800" stroke-width="1.300"/></svg></button>
    </div>
    <button aria-label="Zoom out"><svg width="8" height="8" viewBox="0 0 8 8"><path d="M0 4h8" stroke-width="2"/></svg></button>
    <input type="range" min="0" max="200" value="100" aria-label="Zoom">
    <button aria-label="Zoom in"><svg width="8" height="8" viewBox="0 0 8 8"><path d="M0 4h8M4 0v8" stroke-width="2"/></svg></button>
    <span class="percent">100%</span>
  </footer>
</body>
</html>
```

FILE: styles.css
```css
:root {
  --green: #0f733b;
  --dark-green: #1a6b40;
  --navy: #1f3c6e;
  --ui: Inter, "Liberation Sans", sans-serif;
  --cell: Lato, "Noto Sans", sans-serif;
}

* {
  box-sizing: border-box;
}

body {
  margin: 0;
  height: 100vh;
  display: flex;
  flex-direction: column;
  overflow: hidden;
  font: 11px/12px var(--ui);
  color: #111;
  background: #fff;
}

svg {
  display: block;
  flex: none;
  overflow: visible;
  fill: none;
  stroke: #333;
}

.sprite {
  position: absolute;
  width: 0;
  height: 0;
}

.chev {
  color: #333;
}

button,
input,
select {
  margin: 0;
  padding: 0;
  border: 0;
  background: none;
  font: inherit;
  color: inherit;
  appearance: none;
}

a {
  color: inherit;
  text-decoration: none;
}

/* title bar */

.titlebar {
  display: grid;
  grid-template-columns: 1fr auto 1fr;
  align-items: center;
  height: 38px;
  flex: none;
  padding: 0 11px;
  border-top: 1px solid #86b99c;
  background: var(--green);
  color: #e4f1e9;
}

.titlebar svg {
  stroke: #fff;
}

.titlebar .chev {
  color: #fff;
}

.faded {
  opacity: 0.4;
}

.quick,
.doc,
.account,
.autosave {
  display: flex;
  align-items: center;
}

.quick {
  gap: 11px;
  padding-left: 10px;
}

.undo-list {
  margin: 0 -4px;
}

.autosave {
  gap: 6px;
  font-size: 11px;
  font-weight: 600;
  color: #b9dcc8;
}

.toggle {
  display: grid;
  align-items: center;
}

.toggle > * {
  grid-area: 1 / 1;
}

.toggle input {
  width: 40px;
  height: 14px;
  border-radius: 7px;
  background: #274c37;
}

.toggle input::before {
  content: "";
  display: block;
  width: 13px;
  height: 14px;
  border-radius: 50%;
  background: #fff;
}

.toggle span {
  padding-left: 16px;
  font-size: 8px;
  color: #dfe9e3;
}

.doc {
  gap: 4px;
}

.doc h1 {
  margin: 0;
  font-size: 13px;
  font-weight: 700;
}

.account {
  justify-content: flex-end;
  gap: 19px;
}

/* ribbon */

.ribbon {
  flex: none;
  border-bottom: 1px solid #bdbdbd;
  background: linear-gradient(#f4f4f4, #ebebeb);
}

.tabs {
  display: flex;
  gap: 24px;
  height: 34px;
  padding: 0 10px 0 11px;
  font-size: 13px;
  font-weight: 500;
  color: #333;
}

.tabs a {
  padding-top: 8px;
  height: 28px;
}

.tabs .active {
  font-weight: 700;
  border-bottom: 3px solid var(--dark-green);
}

.tabs .tell {
  display: flex;
  gap: 8px;
}

.actions {
  display: flex;
  gap: 10px;
  margin-left: auto;
  padding-top: 4px;
}

.actions button {
  display: flex;
  align-items: center;
  gap: 4px;
  height: 24px;
  padding: 0 7px;
  border: 1px solid #d2d2d2;
  border-radius: 3px;
  background: #fff;
  font-size: 12px;
  font-weight: 600;
  color: var(--dark-green);
}

.actions svg {
  stroke: var(--dark-green);
}

.groups {
  display: flex;
  padding-bottom: 8px;
}

.group {
  flex: none;
  height: 62px;
  border-right: 1px solid #cbcbcb;
}

.row {
  display: flex;
  align-items: center;
  height: 24px;
}

.row:first-child {
  margin: 5px 0 8px;
}

.square {
  display: grid;
  place-items: center;
  width: 24px;
  height: 24px;
  border-radius: 2px;
}

.pressed {
  border: 1px solid #a9a9a9;
  background: #bfbfbf;
}

.rule {
  width: 1px;
  height: 18px;
  background: #cbcbcb;
}

.big {
  display: flex;
  flex-direction: column;
  align-items: center;
}

.icon {
  display: flex;
  align-items: center;
  gap: 6px;
  height: 39px;
}

.stack button {
  display: flex;
  align-items: center;
  gap: 5px;
  height: 22px;
  white-space: nowrap;
}

.combo {
  display: grid;
  align-items: center;
  height: 24px;
  border: 1px solid #c9c9c9;
  border-radius: 3px;
  background: #fff;
  font-size: 12px;
}

.combo > * {
  grid-area: 1 / 1;
}

.combo select {
  width: 100%;
  height: 20px;
  padding-left: 5px;
}

.combo svg {
  justify-self: end;
  margin-right: 3px;
  pointer-events: none;
}

.clipboard {
  display: flex;
  gap: 6px;
  width: 138px;
  padding-left: 15px;
}

.clipboard .icon {
  gap: 4px;
}

.font {
  width: 270px;
  padding-left: 10px;
}

.combo-font {
  width: 141px;
}

.combo-size {
  width: 54px;
  margin-left: 2px;
}

.grow {
  margin: 0 9px 0 7px;
}

.row-format {
  gap: 6px;
}

.row-format .rule {
  margin: 0 5px;
}

.glyph {
  width: 18px;
  font-size: 14px;
  color: #333;
}

.glyph i {
  font-family: "Liberation Serif", serif;
  font-size: 16px;
}

.under {
  text-decoration: underline;
  text-underline-offset: 3px;
}

.pressed b {
  font-size: 13px;
  color: #333;
}

.align {
  width: 162px;
  padding-left: 10px;
}

.align .row {
  gap: 2px;
}

.align .rule {
  margin: 0 5px 0 6px;
}

.wrap {
  width: 139px;
  padding-left: 12px;
}

.wrap .row {
  gap: 5px;
}

.number {
  width: 176px;
  padding: 0 10px;
}

.combo-number {
  width: 154px;
}

.row-number {
  gap: 8px;
  padding-left: 4px;
}

.row-number .rule {
  margin: 0 4px 0 3px;
}

.styles {
  display: flex;
  gap: 4px;
  width: 429px;
  padding-left: 12px;
}

.gallery {
  display: flex;
  align-items: center;
  gap: 7px;
  height: 58px;
  margin-top: 1px;
  padding: 0 6px 0 18px;
  border: 1px solid #c4c4c4;
  border-radius: 3px;
  background: #fff;
}

.swatches {
  display: grid;
  grid-template-columns: repeat(3, 84px);
  gap: 7px 2px;
}

.swatches button {
  height: 20px;
  padding-left: 4px;
  font: 10px/20px var(--cell);
  text-align: left;
  color: #000;
  white-space: nowrap;
}

.accent1 { background: #c5c1fb; }
.accent2 { background: #fd8cbd; }
.accent3 { background: #c3fdc4; }
.accent4 { background: #c48bfb; }
.accent5 { background: #c3fdfd; }
.accent6 { background: #fdc48d; }

.cells {
  display: flex;
  gap: 5px;
  width: 169px;
  padding-left: 12px;
}

.editing {
  display: flex;
  gap: 5px;
  width: 211px;
  padding-left: 13px;
}

.editing .stack {
  width: 88px;
}

.analyse {
  width: 65px;
  padding-left: 10px;
}

.adobe {
  padding-left: 12px;
  border: 0;
}

/* formula bar */

.formula {
  display: flex;
  align-items: center;
  flex: none;
  height: 29px;
  padding-right: 4px;
  border-bottom: 3px double #a5a5a5;
  background: #fff;
}

.namebox {
  display: flex;
  align-items: center;
  justify-content: space-between;
  width: 86px;
  height: 26px;
  margin-right: 14px;
  padding: 0 5px 0 9px;
  border: 1px solid #a5a5a5;
  font: 13px/16px var(--cell);
}

.namebox input {
  width: 50px;
}

.formula > button {
  margin-right: 17px;
}

.formula .fx {
  margin-right: 8px;
  font: italic 16px/20px "Liberation Serif", serif;
  color: #333;
}

.formula .entry {
  flex: 1;
  height: 15px;
  padding-left: 7px;
  border-left: 1px solid #d9d9d9;
}

.formula > button:last-child {
  margin: 0;
}

/* worksheet */

.sheet {
  flex: 1;
  min-height: 0;
  overflow: hidden;
  background: #fff;
}

table {
  width: 100%;
  table-layout: fixed;
  border-collapse: separate;
  border-spacing: 0;
  font: 10px/13px var(--cell);
  color: #000;
}

.w14 { width: 14px; }
.w22 { width: 22px; }
.w23 { width: 23px; }
.w53 { width: 53px; }
.w68 { width: 68px; }
.w69 { width: 69px; }
.w75 { width: 75px; }
.w85 { width: 85px; }
.w87 { width: 87px; }
.w89 { width: 89px; }
.w109 { width: 109px; }
.w125 { width: 125px; }

th,
td {
  height: 15px;
  padding: 0 0 1px 2px;
  white-space: nowrap;
}

th {
  padding: 0;
  border-bottom: 1px solid #d4d4d4;
  border-right: 1px solid #a5a5a5;
  background: linear-gradient(90deg, #fff, #f1f1f1);
  font-weight: 400;
  color: #444;
}

thead th {
  height: 22px;
  border-right: 1px solid #d4d4d4;
  border-bottom: 1px solid #a9b0ac;
  background: linear-gradient(#fff, #f4f4f4);
}

thead .corner {
  border-right: 1px solid #a5a5a5;
}

.corner svg {
  margin-left: auto;
  margin-right: 2px;
}

.freeze,
thead .freeze {
  border-right: 1px solid #8c8c8c;
}

th.current {
  background: #efefef;
  color: #1a6b40;
  border-right: 2px solid #1a6b40;
}

thead th.current {
  font-weight: 700;
  border-right: 1px solid #d4d4d4;
  border-bottom: 2px solid #1a6b40;
}

.h10 th,
.h10 td {
  height: 10px;
  line-height: 9px;
}

.h12 th,
.h12 td {
  height: 12px;
  line-height: 11px;
}

.h14 th,
.h14 td {
  height: 14px;
  line-height: 13px;
}

.banner th,
.banner td {
  height: 21px;
  padding-bottom: 0;
  line-height: 20px;
}

.banner td {
  background: var(--navy);
  font-size: 13px;
  font-weight: 700;
  color: #fff;
}

.years td {
  padding-bottom: 0;
  border-bottom: 1px solid #8c8c8c;
}

.note {
  font-size: 11px;
  font-style: italic;
}

.years .year {
  padding-right: 3px;
  background: #d9e1ec;
  font-weight: 700;
  text-align: right;
}

.section td {
  font-size: 11px;
  font-weight: 700;
  font-style: italic;
}

.detail {
  font-size: 9px;
  font-style: italic;
}

.total,
.closing td {
  font-weight: 700;
}

.num,
.neg,
.nil {
  text-align: right;
}

.neg {
  padding-right: 3px;
}

.num {
  padding-right: 6px;
}

.nil {
  padding-right: 17px;
}

.line {
  padding-bottom: 0;
  border-bottom: 1px solid #000;
}

.selected {
  position: relative;
}

.selected::before {
  content: "";
  position: absolute;
  inset: -2px -1px -1px -2px;
  border: 2px solid #1a6b40;
}

.selected::after {
  content: "";
  position: absolute;
  right: -2px;
  bottom: -2px;
  width: 6px;
  height: 6px;
  border: solid #fff;
  border-width: 1px 0 0 1px;
  background: #1a6b40;
}

/* sheet tabs */

.sheettabs {
  display: flex;
  flex: none;
  height: 27px;
  border-top: 1px solid #bdbdbd;
  border-bottom: 1px solid #949494;
  background: #eee;
  font: 12px/20px "Liberation Sans", sans-serif;
  color: #555;
}

.arrows {
  display: flex;
  align-items: center;
  gap: 15px;
  width: 61px;
  padding-left: 14px;
  border-right: 1px solid #c4c4c4;
}

.sheettabs a {
  height: 23px;
  padding: 2px 3px 0;
  border-right: 1px solid #c4c4c4;
}

.sheettabs span {
  display: block;
  padding: 0 17px;
}

.sheettabs .black span {
  padding: 0 24px;
  background: #000;
  color: #fff;
}

.sheettabs .red span {
  background: #b94c48;
  color: #fff;
}

.sheettabs .blue span {
  padding: 0 14px;
  background: var(--navy);
  color: #fff;
}

.sheettabs .open {
  background: #fff;
  border-bottom: 1px solid #999;
}

.sheettabs .open span {
  height: 17px;
  padding: 0 12px;
  background: linear-gradient(#e4e8ef, #8e9cb9);
  font-weight: 700;
  color: #1f7a4a;
}

.add {
  padding: 0 14px;
  height: 23px;
  border-right: 1px solid #c4c4c4;
}

/* status bar */

.status {
  display: flex;
  align-items: center;
  flex: none;
  height: 22px;
  padding: 0 25px 0 24px;
  background: linear-gradient(#dfdfdf, #d2d2d2);
  font-size: 12px;
  color: #505050;
}

.status svg {
  stroke: #555;
}

.access {
  display: flex;
  align-items: center;
  gap: 3px;
  margin-left: 20px;
}

.views {
  display: flex;
  align-self: stretch;
  margin: 0 8px 0 auto;
}

.views button {
  display: grid;
  place-items: center;
  width: 36px;
}

.views .on {
  background: #999;
}

input[type="range"] {
  width: 100px;
  height: 4px;
  margin: 0 7px;
  border-radius: 2px;
  background: #999;
}

input[type="range"]::-webkit-slider-thumb {
  appearance: none;
  width: 16px;
  height: 16px;
  border-radius: 50%;
  background: #fff;
  box-shadow: 0 1px 2px #888;
}

.percent {
  margin-left: 16px;
}
```
